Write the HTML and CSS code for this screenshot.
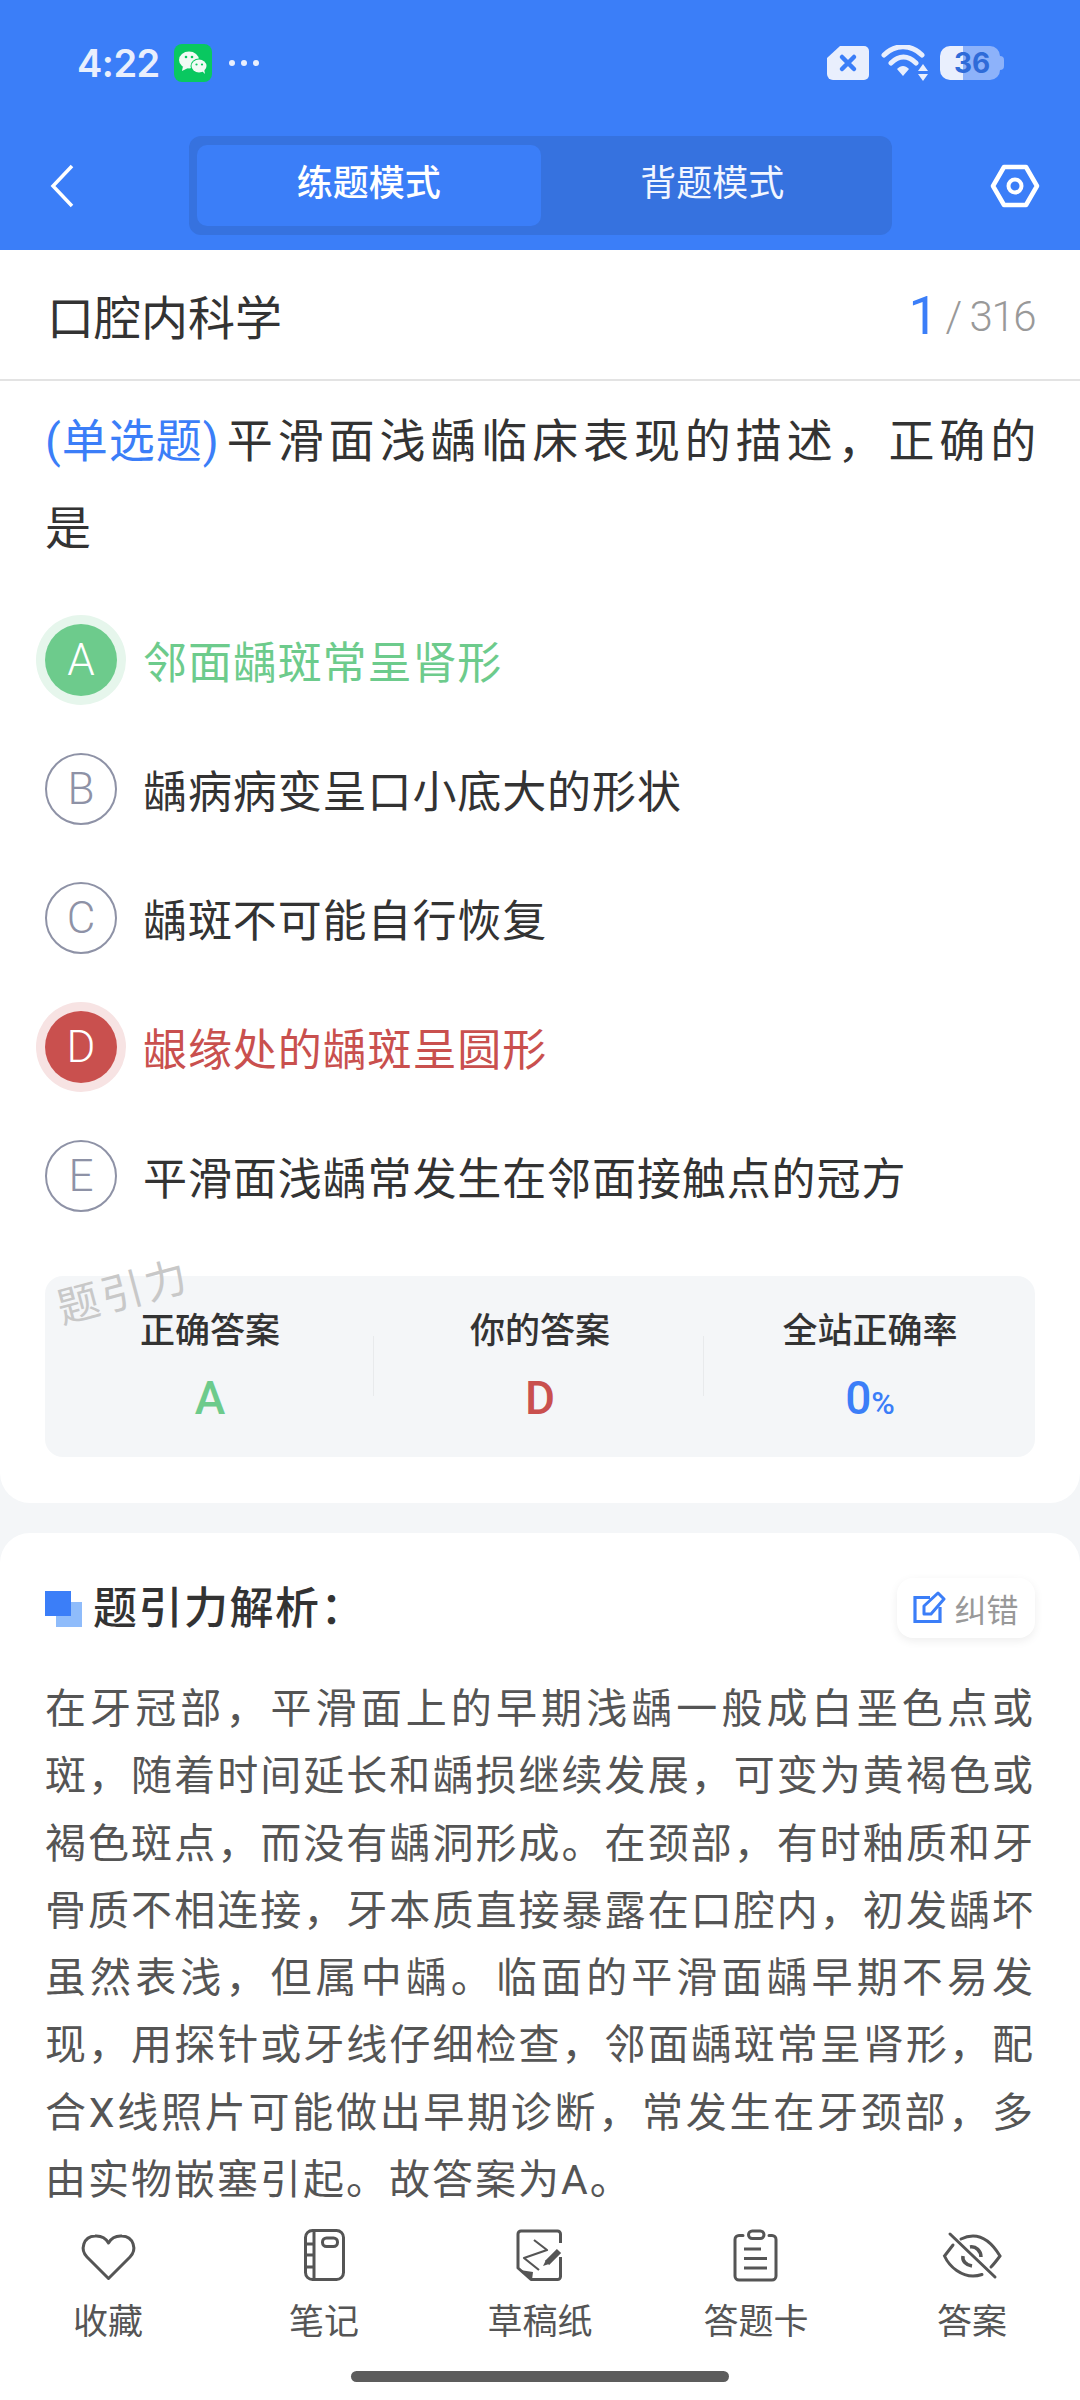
FILE: index.html
```html
<!DOCTYPE html>
<html lang="zh-CN">
<head>
    <meta charset="UTF-8">
    <meta name="viewport" content="width=device-width, initial-scale=1.0">
    <title>练题模式</title>
    <link rel="stylesheet" href="styles.css">
</head>
<body>
<div class="page">

    <!-- Blue header -->
    <header class="header">
        <div class="status-bar">
            <div class="status-left">
                <span class="clock">4:22</span>
                <svg class="wechat" viewBox="0 0 38 38">
                    <rect width="38" height="38" rx="8" fill="#09c860"/>
                    <ellipse cx="15" cy="16" rx="10" ry="8.5" fill="#f2fbf5"/>
                    <path d="M9 22l-1 5 6-3z" fill="#f2fbf5"/>
                    <ellipse cx="25" cy="22" rx="8.5" ry="7.5" fill="#09c860"/>
                    <ellipse cx="25" cy="22" rx="7.5" ry="6.5" fill="#f2fbf5"/>
                    <path d="M28 27l3 3-1-5z" fill="#f2fbf5"/>
                    <circle cx="12" cy="13" r="1.3" fill="#09c860"/>
                    <circle cx="18" cy="13" r="1.3" fill="#09c860"/>
                    <circle cx="22.5" cy="20.5" r="1.1" fill="#09c860"/>
                    <circle cx="28" cy="20.5" r="1.1" fill="#09c860"/>
                </svg>
                <span class="dots"><i></i><i></i><i></i></span>
            </div>
            <div class="status-right">
                <svg class="sim" viewBox="0 0 44 36">
                    <path d="M14 1H38a5 5 0 0 1 5 5V30a5 5 0 0 1-5 5H7a6 6 0 0 1-6-6V13z" fill="#e9effd"/>
                    <path d="M16 12l12 12M28 12L16 24" stroke="#3b7ef8" stroke-width="4.5" stroke-linecap="round"/>
                </svg>
                <svg class="wifi" viewBox="0 0 48 36">
                    <path d="M3 10C14 -1 30 -1 41 10M10 18C18 10 27 10 35 18" fill="none" stroke="#e9effd" stroke-width="5" stroke-linecap="round"/>
                    <path d="M16 24c4-4 8-4 12 0l-6 7z" fill="#e9effd"/>
                    <path d="M42 19l5 7H37zM42 36l5-7H37z" fill="#e9effd"/>
                </svg>
                <div class="battery">
                    <span class="battery-num">36</span>
                </div>
            </div>
        </div>
        <div class="nav-bar">
            <svg class="back" viewBox="0 0 24 44">
                <path d="M22 2L3 22l19 20" fill="none" stroke="#fff" stroke-width="3.5"/>
            </svg>
            <div class="mode-tabs">
                <div class="mode-tab active">练题模式</div>
                <div class="mode-tab">背题模式</div>
            </div>
            <svg class="settings" viewBox="0 0 50 44">
                <path d="M14 3H36L47 22 36 41H14L3 22z" fill="none" stroke="#fff" stroke-width="4.5" stroke-linejoin="round"/>
                <circle cx="25" cy="22" r="6.5" fill="none" stroke="#fff" stroke-width="4"/>
            </svg>
        </div>
    </header>

    <!-- Question card -->
    <section class="card question-card">
        <div class="subject-row">
            <span class="subject">口腔内科学</span>
            <span class="progress"><b>1</b><em>/</em>316</span>
        </div>
        <p class="question"><span class="q-type">(单选题)</span>平滑面浅龋临床表现的描述，正确的是</p>

        <ul class="options">
            <li class="option correct"><span class="letter">A</span>邻面龋斑常呈肾形</li>
            <li class="option"><span class="letter">B</span>龋病病变呈口小底大的形状</li>
            <li class="option"><span class="letter">C</span>龋斑不可能自行恢复</li>
            <li class="option wrong"><span class="letter">D</span>龈缘处的龋斑呈圆形</li>
            <li class="option"><span class="letter">E</span>平滑面浅龋常发生在邻面接触点的冠方</li>
        </ul>

        <div class="answer-box">
            <span class="watermark">题引力</span>
            <div class="answer-col">
                <div class="answer-label">正确答案</div>
                <div class="answer-value green">A</div>
            </div>
            <div class="answer-col">
                <div class="answer-label">你的答案</div>
                <div class="answer-value red">D</div>
            </div>
            <div class="answer-col">
                <div class="answer-label">全站正确率</div>
                <div class="answer-value blue">0<small>%</small></div>
            </div>
        </div>
    </section>

    <!-- Analysis card -->
    <section class="card analysis-card">
        <div class="analysis-head">
            <div class="analysis-title">
                <span class="squares"><i></i><i></i></span>
                题引力解析：
            </div>
            <div class="report-btn">
                <svg viewBox="0 0 34 34">
                    <path d="M17 6.5H2V30.5H27V16" fill="none" stroke="#3b7ef8" stroke-width="3.2"/>
                    <path d="M11 23V15L25 2l6 6L18 23z" fill="none" stroke="#3b7ef8" stroke-width="3" stroke-linejoin="round"/>
                </svg>
                纠错
            </div>
        </div>
        <p class="analysis-text">在牙冠部，平滑面上的早期浅龋一般成白垩色点或斑，随着时间延长和龋损继续发展，可变为黄褐色或褐色斑点，而没有龋洞形成。在颈部，有时釉质和牙骨质不相连接，牙本质直接暴露在口腔内，初发龋坏虽然表浅，但属中龋。临面的平滑面龋早期不易发现，用探针或牙线仔细检查，邻面龋斑常呈肾形，配合X线照片可能做出早期诊断，常发生在牙颈部，多由实物嵌塞引起。故答案为A。</p>
    </section>

    <!-- Bottom toolbar -->
    <nav class="toolbar">
        <div class="tool">
            <svg viewBox="0 0 60 60">
                <path d="M30.5 52.5L9 31C2 24 5 10.5 17 10c6-.4 11 2.500 13.500 7C33 12.500 38 9.600 44 10c12 .5 15 14 8 21z" fill="none" stroke="#555" stroke-width="3" stroke-linejoin="round"/>
            </svg>
            <span>收藏</span>
        </div>
        <div class="tool">
            <svg viewBox="0 0 60 60">
                <rect x="11.500" y="4.500" width="38" height="49" rx="7" fill="none" stroke="#555" stroke-width="3"/>
                <path d="M20 4.500V53.500" stroke="#555" stroke-width="3"/>
                <path d="M11.500 18H20M11.500 29H20M11.500 41H20" stroke="#555" stroke-width="3"/>
                <rect x="28.500" y="12" width="15" height="8.500" rx="4" fill="none" stroke="#555" stroke-width="3"/>
            </svg>
            <span>笔记</span>
        </div>
        <div class="tool">
            <svg viewBox="0 0 60 60">
                <path d="M50.500 17V8a3 3 0 0 0-3-3H11a3 3 0 0 0-3 3V42L21 53.500H47.500a3 3 0 0 0 3-3V31" fill="none" stroke="#555" stroke-width="3" stroke-linejoin="round"/>
                <path d="M10 44L23 46 22 54z" fill="#555"/>
                <path d="M24 14L37 24 14 32 29 44" fill="none" stroke="#555" stroke-width="2.200" stroke-linejoin="round"/>
                <path d="M49 25L37 37" stroke="#555" stroke-width="6"/>
                <path d="M36 34L39 38 33 40z" fill="#555"/>
            </svg>
            <span>草稿纸</span>
        </div>
        <div class="tool">
            <svg viewBox="0 0 60 60">
                <path d="M17 9.500H13a4 4 0 0 0-4 4V50a4 4 0 0 0 4 4H46a4 4 0 0 0 4-4V13.500a4 4 0 0 0-4-4H43" fill="none" stroke="#555" stroke-width="3" stroke-linecap="round"/>
                <rect x="22.500" y="5" width="15.500" height="7.500" rx="3.700" fill="none" stroke="#555" stroke-width="3"/>
                <path d="M18 23H35M18 32.500H41M18 42H41" stroke="#555" stroke-width="3"/>
            </svg>
            <span>答题卡</span>
        </div>
        <div class="tool">
            <svg viewBox="0 0 60 60">
                <path d="M11 19L2.500 30C8 42 20 50 31 50c3 0 6-.5 9-1.500M19 13c4-2 8-3 12-3 12 0 21 10 27 20-3 4-6 8-9 11" fill="none" stroke="#555" stroke-width="3" stroke-linecap="round"/>
                <path d="M28 21C34 20 39 25 39 31M21 30C20 35 24 39 30 40" fill="none" stroke="#555" stroke-width="3.500"/>
                <path d="M8 8L53 51" stroke="#555" stroke-width="3" stroke-linecap="round"/>
            </svg>
            <span>答案</span>
        </div>
    </nav>

    <div class="home-bar"><div class="home-indicator"></div></div>
</div>
</body>
</html>
```

FILE: styles.css
```css
* {
    box-sizing: border-box;
}
html, body {
    margin: 0;
    padding: 0;
}
body {
    width: 1080px;
    height: 2400px;
    overflow: hidden;
    background-color: #f4f6f8;
    font-family: Roboto, 'Noto Sans CJK SC', sans-serif;
    color: #333;
}
.page {
    display: flex;
    flex-direction: column;
    height: 2400px;
}

/* Header */
.header {
    height: 250px;
    background-color: #3b7ef8;
    flex: none;
}
.status-bar {
    display: flex;
    justify-content: space-between;
    align-items: center;
    height: 136px;
    padding: 0 76px 10px 77px;
}
.status-left, .status-right {
    display: flex;
    align-items: center;
}
.clock {
    font-family: Inter, sans-serif;
    font-weight: 600;
    font-size: 38px;
    color: #e9effd;
    letter-spacing: -0.5px;
}
.wechat {
    width: 38px;
    height: 38px;
    margin-left: 14px;
}
.dots {
    display: flex;
    gap: 6px;
    margin-left: 17px;
}
.dots i {
    width: 6px;
    height: 6px;
    border-radius: 50%;
    background-color: #e9effd;
}
.sim {
    width: 44px;
    height: 36px;
}
.wifi {
    width: 48px;
    height: 36px;
    margin-left: 11px;
}
.battery {
    position: relative;
    width: 60px;
    height: 34px;
    margin: 0 4px 0 11px;
    border-radius: 10px;
    background: linear-gradient(to right, #e9effd 23px, #8db2fa 23px);
}
.battery::after {
    content: "";
    position: absolute;
    right: -4px;
    top: 10px;
    width: 4px;
    height: 14px;
    border-radius: 0 4px 4px 0;
    background-color: #8db2fa;
}
.battery-num {
    position: absolute;
    left: 14px;
    top: 0;
    font-family: Inter, sans-serif;
    font-weight: 700;
    font-size: 28px;
    line-height: 34px;
    color: #2f6bd8;
}
.nav-bar {
    display: flex;
    align-items: center;
    height: 99px;
    padding: 0 40px 0 50px;
}
.back {
    width: 24px;
    height: 44px;
}
.mode-tabs {
    display: flex;
    align-items: center;
    width: 703px;
    height: 99px;
    margin-left: 115px;
    padding: 0 8px;
    background-color: #3672df;
    border-radius: 12px;
}
.mode-tab {
    width: 344px;
    height: 81px;
    line-height: 79px;
    text-align: center;
    font-size: 36px;
    color: #f2f6ff;
    border-radius: 10px;
}
.mode-tab.active {
    background-color: #3b7ef8;
    font-weight: 500;
    color: #fff;
}
.settings {
    width: 50px;
    height: 44px;
    margin-left: auto;
}

/* Cards */
.card {
    background-color: #fff;
    border-radius: 30px;
    flex: none;
}
.question-card {
    position: relative;
    height: 1253px;
    border-radius: 0 0 30px 30px;
}
.subject-row {
    display: flex;
    justify-content: space-between;
    align-items: center;
    height: 131px;
    padding: 0 45px 0 47px;
    border-bottom: 2px solid #e3e3e3;
}
.subject {
    font-size: 47px;
    color: #333;
}
.progress {
    display: flex;
    align-items: center;
    padding-top: 3px;
    font-weight: 300;
    font-size: 42px;
    letter-spacing: -1.5px;
    color: #999;
}
.progress b {
    font-weight: 400;
    font-size: 53px;
    letter-spacing: 0;
    color: #3b7ef8;
}
.progress em {
    font-style: normal;
    margin: 0 9px 0 7px;
}
.question {
    margin: 0;
    padding: 17px 35px 0 45px;
    font-size: 46px;
    line-height: 87px;
    letter-spacing: 4.900px;
    color: #333;
}
.q-type {
    margin-right: 7px;
    color: #3b7ef8;
    letter-spacing: 1px;
}
.options {
    list-style: none;
    margin: 23px 0 0;
    padding: 0 0 0 45px;
}
.option {
    display: flex;
    align-items: center;
    height: 129px;
    font-size: 44px;
    letter-spacing: 0.9px;
    color: #333;
}
.letter {
    display: flex;
    align-items: center;
    justify-content: center;
    flex: none;
    width: 72px;
    height: 72px;
    margin-right: 26px;
    border: 2px solid #8e92a6;
    border-radius: 50%;
    font-weight: 300;
    font-size: 44px;
    letter-spacing: 0;
    color: #8e92a6;
}
.option.correct {
    color: #6dcb8c;
}
.correct .letter {
    border: none;
    background-color: #6dcb8c;
    color: #fff;
    box-shadow: 0 0 0 9px #e6f6ec;
}
.option.wrong {
    color: #c9504e;
}
.wrong .letter {
    border: none;
    background-color: #c9504e;
    color: #fff;
    box-shadow: 0 0 0 9px #f7e3e3;
}
.answer-box {
    position: relative;
    display: flex;
    width: 990px;
    height: 181px;
    margin: 36px 0 0 45px;
    background-color: #f4f6f8;
    border-radius: 18px;
}
.watermark {
    position: absolute;
    left: 10px;
    top: -18px;
    font-size: 42px;
    color: #c8c8c8;
    transform: rotate(-15deg);
    letter-spacing: 3px;
}
.answer-col {
    flex: 1;
    text-align: center;
    padding-top: 31px;
    position: relative;
}
.answer-col + .answer-col::before {
    content: "";
    position: absolute;
    left: -2px;
    top: 60px;
    height: 60px;
    width: 1px;
    background-color: #e8eaec;
}
.answer-label {
    font-size: 35px;
    font-weight: 500;
    line-height: 50px;
    color: #333;
}
.answer-value {
    font-size: 46px;
    font-weight: 500;
    line-height: 60px;
    margin-top: 11px;
}
.answer-value small {
    font-size: 32px;
}
.green { color: #6dcb8c; }
.red { color: #c9504e; }
.blue { color: #3b7ef8; }

.analysis-card {
    flex: 1;
    min-height: 0;
    margin-top: 30px;
    padding: 45px 45px 0;
    border-radius: 30px 30px 0 0;
}
.analysis-head {
    display: flex;
    justify-content: space-between;
    align-items: center;
    height: 60px;
}
.analysis-title {
    display: flex;
    align-items: center;
    padding-top: 2px;
    font-size: 44px;
    font-weight: 500;
    letter-spacing: 1.500px;
    line-height: 58px;
    color: #333;
}
.squares {
    position: relative;
    width: 37px;
    height: 36px;
    margin-right: 11px;
}
.squares i {
    position: absolute;
    width: 26px;
    height: 25px;
}
.squares i:first-child {
    right: 0;
    bottom: 0;
    background-color: #8fbcfb;
}
.squares i:last-child {
    left: 0;
    top: 0;
    background-color: #3b7ef8;
}
.report-btn {
    display: flex;
    align-items: center;
    justify-content: center;
    gap: 7px;
    width: 138px;
    height: 60px;
    border-radius: 16px;
    background-color: #fff;
    box-shadow: 0 3px 10px rgba(0, 0, 0, 0.07);
    font-size: 32px;
    color: #999;
}
.report-btn svg {
    width: 34px;
    height: 34px;
}
.analysis-text {
    margin: 38px 0 0;
    font-size: 41px;
    line-height: 67.3px;
    letter-spacing: 2px;
    text-align: justify;
    color: #555;
}

/* Bottom toolbar */
.toolbar {
    position: absolute;
    left: 0;
    top: 2215px;
    display: flex;
    width: 1080px;
    height: 185px;
    padding-top: 11px;
    background-color: #fff;
}
.tool {
    display: flex;
    flex-direction: column;
    align-items: center;
    width: 216px;
}
.tool svg {
    width: 60px;
    height: 60px;
}
.tool span {
    margin-top: 12px;
    font-size: 35px;
    line-height: 50px;
    color: #555;
}
.home-bar {
    position: absolute;
    left: 0;
    top: 2371px;
    display: flex;
    justify-content: center;
    width: 1080px;
}
.home-indicator {
    width: 378px;
    height: 11px;
    border-radius: 6px;
    background-color: #5c5c5c;
}
```
